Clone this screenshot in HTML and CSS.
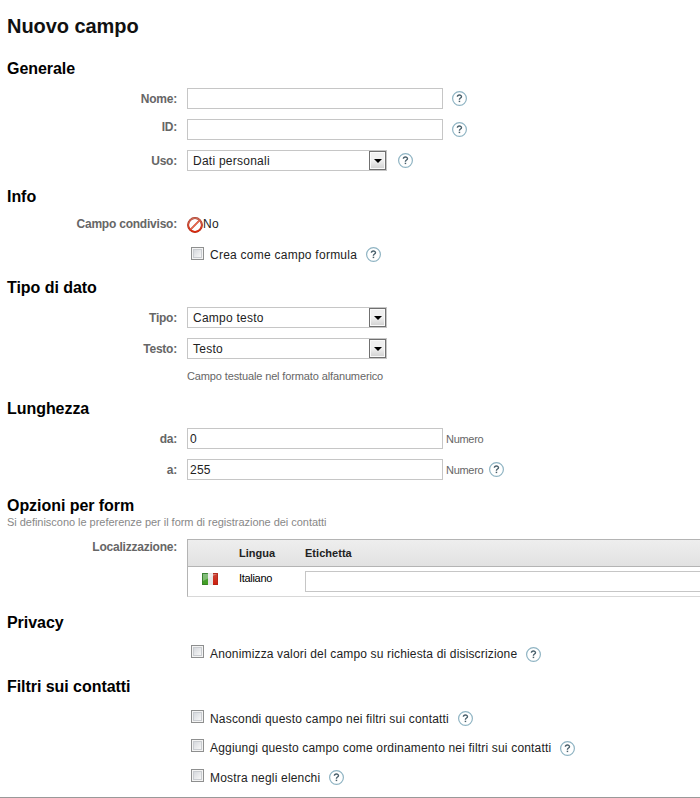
FILE: index.html
```
<!DOCTYPE html>
<html lang="it">
<head>
<meta charset="utf-8">
<title>Nuovo campo</title>
<link rel="stylesheet" href="styles.css">
</head>
<body>
<svg width="0" height="0" class="defs" aria-hidden="true">
  <symbol id="help" viewBox="0 0 15 15">
    <circle cx="7.5" cy="7.5" r="6.9" fill="#fff" stroke="#8fb4c3" stroke-width="1.2"/>
    <path d="M5.400 5.800C5.400 3.500 9.500 3.500 9.500 5.700C9.500 7.100 7.400 7 7.400 8.700" fill="none" stroke="#4a606c" stroke-width="1.400"/>
    <rect x="6.700" y="9.700" width="1.500" height="1.400" fill="#4a606c"/>
  </symbol>
</svg>
<form class="page">
  <h1>Nuovo campo</h1>

  <section class="general">
    <h2>Generale</h2>
    <div class="row"><label>Nome:</label><div class="cell"><span class="input"></span><svg class="help"><use href="#help"/></svg></div></div>
    <div class="row"><label class="raised">ID:</label><div class="cell"><span class="input"></span><svg class="help"><use href="#help"/></svg></div></div>
    <div class="row"><label>Uso:</label><div class="cell"><span class="select">Dati personali<span class="arrow"></span></span><svg class="help after-select"><use href="#help"/></svg></div></div>
  </section>

  <section class="info">
    <h2>Info</h2>
    <div class="row shared"><label>Campo condiviso:</label><div class="cell"><svg class="no" viewBox="0 0 16 16"><defs><linearGradient id="red" x2="0" y2="1"><stop stop-color="#c96a58"/><stop offset="1" stop-color="#dc260a"/></linearGradient></defs><circle cx="8" cy="8" r="6.9" fill="#fff" stroke="#a63420" stroke-width="2"/><path d="M3.7 12.3L12.3 3.7" stroke="#c8452c" stroke-width="1.7"/><circle cx="8" cy="8" r="6.8" fill="none" stroke="url(#red)" stroke-width="1.300"/><path d="M3.7 12.3L12.3 3.7" stroke="#ed684c" stroke-width="1"/></svg><span>No</span></div></div>
    <div class="row check"><span></span><div class="cell"><span class="box"></span><span class="text">Crea come campo formula</span><svg class="help"><use href="#help"/></svg></div></div>
  </section>

  <section class="type">
    <h2>Tipo di dato</h2>
    <div class="row"><label>Tipo:</label><div class="cell"><span class="select">Campo testo<span class="arrow"></span></span></div></div>
    <div class="row"><label>Testo:</label><div class="cell"><span class="select">Testo<span class="arrow"></span></span></div></div>
    <div class="row note"><span></span><div class="cell small">Campo testuale nel formato alfanumerico</div></div>
  </section>

  <section class="length">
    <h2>Lunghezza</h2>
    <div class="row"><label>da:</label><div class="cell"><span class="input">0</span><span class="small unit">Numero</span></div></div>
    <div class="row"><label>a:</label><div class="cell"><span class="input">255</span><span class="small unit">Numero</span><svg class="help after-unit"><use href="#help"/></svg></div></div>
  </section>

  <section class="options">
    <h2>Opzioni per form</h2>
    <p class="small subtitle">Si definiscono le preferenze per il form di registrazione dei contatti</p>
    <div class="row local"><label>Localizzazione:</label>
      <div class="table">
        <div class="thead"><span></span><span>Lingua</span><span>Etichetta</span></div>
        <div class="tbody"><svg class="flag" viewBox="0 0 16 12"><defs><linearGradient id="g" x2="0" y2="1"><stop stop-color="#4f9f4a"/><stop offset="1" stop-color="#3f9e1c"/></linearGradient><linearGradient id="r" x2="0" y2="1"><stop stop-color="#c8473a"/><stop offset="1" stop-color="#cf1b0a"/></linearGradient></defs><rect width="16" height="12" fill="#e6e6e6"/><rect width="6" height="12" fill="url(#g)"/><rect x="11" width="5" height="12" fill="url(#r)"/><path d="M1 1H15L1 8Z" fill="#fff" opacity=".3"/><path d="M5.500 .5H.5V11.500H5.500" fill="none" stroke="#33752c" opacity=".7"/><path d="M11 .5H15.500V11.500H11" fill="none" stroke="#a82318" opacity=".7"/></svg><span class="lang">Italiano</span><span class="input wide"></span></div>
      </div>
    </div>
  </section>

  <section class="privacy">
    <h2>Privacy</h2>
    <div class="row check"><span></span><div class="cell"><span class="box"></span><span class="text">Anonimizza valori del campo su richiesta di disiscrizione</span><svg class="help"><use href="#help"/></svg></div></div>
  </section>

  <section class="filters">
    <h2>Filtri sui contatti</h2>
    <div class="row check"><span></span><div class="cell"><span class="box"></span><span class="text">Nascondi questo campo nei filtri sui contatti</span><svg class="help"><use href="#help"/></svg></div></div>
    <div class="row check second"><span></span><div class="cell"><span class="box"></span><span class="text">Aggiungi questo campo come ordinamento nei filtri sui contatti</span><svg class="help"><use href="#help"/></svg></div></div>
    <div class="row check"><span></span><div class="cell"><span class="box"></span><span class="text">Mostra negli elenchi</span><svg class="help"><use href="#help"/></svg></div></div>
  </section>
</form>
</body>
</html>
```
FILE: styles.css
```
* { box-sizing: border-box; }
body {
  margin: 0;
  background: #fff;
  color: #222;
  font: 12px "Liberation Sans", Arial, sans-serif;
  letter-spacing: .25px;
  overflow: hidden;
}
.defs { display: block; height: 0; }
.page { height: 798px; border-bottom: 1px solid #999; overflow: hidden; }
h1, h2 { margin: 0 0 0 7px; letter-spacing: -.05px; white-space: nowrap; }
h1 { font-size: 20px; line-height: 52px; color: #111; }
h2 { font-size: 16px; line-height: 30px; color: #000; }
.row { display: grid; grid-template-columns: 177px 1fr; column-gap: 10px; height: 31px; align-items: center; }
label { text-align: right; font-weight: bold; color: #666; letter-spacing: -.22px; }
.raised { padding-bottom: 5px; }
.cell { display: flex; align-items: center; white-space: nowrap; }
.input, .select {
  display: flex;
  align-items: center;
  width: 256px;
  height: 21px;
  border: 1px solid #c6c6c6;
  background: #fff;
  padding-left: 2px;
}
.select { width: 200px; padding-left: 5px; justify-content: space-between; }
.arrow {
  display: flex;
  align-items: center;
  justify-content: center;
  width: 17px;
  height: 19px;
  border: 1px solid #707070;
  box-shadow: inset 0 0 0 1px #fafafa;
  background: linear-gradient(#f0f0f0 50%, #d0d0d0);
}
.arrow::after { content: ""; border: 4px solid transparent; border-top-color: #000; border-bottom: 0; }
.help { width: 15px; height: 15px; margin-left: 9px; flex: none; }
.after-select { margin-left: 11px; }
.after-unit { margin-left: 6px; }
.no { width: 16px; height: 16px; margin-top: 2px; }
.small { font-size: 11px; color: #666; letter-spacing: -.13px; }
.unit { margin-left: 3px; letter-spacing: -.3px; }
.box {
  width: 13px;
  height: 13px;
  margin: 0 6px 3px 4px;
  border: 1px solid #8e8f8f;
  box-shadow: inset 0 0 0 1px #f4f4f4, inset 0 0 0 2px #c9ccd0;
  background: linear-gradient(135deg, #cbcfd5, #f6f6f6 80%);
}
.general { padding-top: 1px; }
.general h2 { line-height: 32px; height: 30px; }
.info { padding-top: 5px; }
.info h2 { line-height: 32px; height: 27px; }
.info .check { height: 31px; }
.type { padding-top: 3px; }
.type h2 { line-height: 29px; }
.note { height: 25px; padding-bottom: 2px; }
.length { padding-top: 5px; }
.length h2 { line-height: 29px; }
.options { padding-top: 6px; }
.options h2 { line-height: 29px; height: 24px; }
.subtitle { margin: 0 0 0 7px; height: 24px; line-height: 15px; color: #888; letter-spacing: -.03px; }
.local { height: 58px; align-items: start; }
.local label { padding-top: 1px; }
.table { border: 1px solid #b4b4b4; border-right: 0; border-bottom-color: #d8d8d8; height: 58px; overflow: hidden; }
.thead, .tbody { display: grid; grid-template-columns: 37px 66px 1fr; padding-left: 14px; }
.thead { height: 27px; line-height: 27px; border-bottom: 1px solid #b4b4b4; background: linear-gradient(#eee, #e2e2e2); font-size: 11px; font-weight: bold; letter-spacing: .03px; }
.tbody { align-items: start; padding-top: 4px; }
.flag { width: 16px; height: 12px; margin-top: 2px; }
.lang { font-size: 11px; line-height: 14px; letter-spacing: -.3px; color: #000; }
.wide { width: auto; border-right: 0; }
.privacy { padding-top: 11px; }
.privacy .check { height: 32px; }
.privacy .box { margin-bottom: 5px; }
.privacy .text { letter-spacing: .16px; }
.filters .text { letter-spacing: .18px; }
.privacy h2, .filters h2 { line-height: 30px; }
.filters { padding-top: 2px; }
.filters h2 { height: 31px; }
.filters .check { height: 29px; }
.filters .check:nth-of-type(1) { height: 31px; }
.filters .box { margin-bottom: 4px; }
.filters .second .box { margin-bottom: 6px; }
.filters .second .text { margin-bottom: 1px; }
```
